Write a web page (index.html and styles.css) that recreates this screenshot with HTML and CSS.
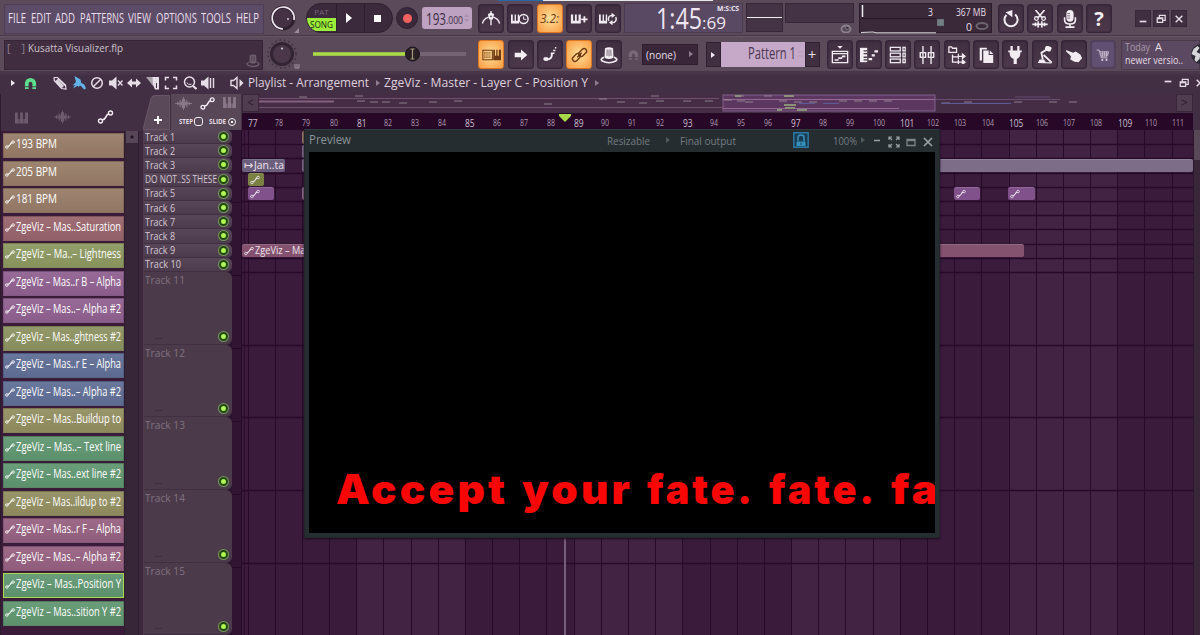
FILE: index.html
```html
<!DOCTYPE html>
<html lang="en">
<head>
<meta charset="utf-8">
<title>Kusatta Visualizer.flp</title>
<link rel="stylesheet" href="styles.css">
</head>
<body>
<svg class="sprite" aria-hidden="true">
  <symbol id="metro" viewBox="0 0 20 20"><path d="M.500 15q1-5 7-7M19.500 15q-1-5-7-7" fill="none" stroke="currentColor" stroke-width="1.500"/><path d="M10 1v16" stroke="currentColor" stroke-width="1.500"/><path d="M6.500 4.500L10 3l3.500 1.500-1.500 6H8z" fill="currentColor"/><circle cx="10" cy="7" r="1" fill="#49384a"/></symbol>
  <symbol id="wait" viewBox="0 0 20 20"><path d="M0 5h2v7h2V5h1.500v7h2V5H9v10H0z" fill="currentColor"/><circle cx="14" cy="10" r="5" fill="none" stroke="currentColor" stroke-width="1.600"/><path d="M14 7v3.300h3" fill="none" stroke="currentColor"/></symbol>
  <symbol id="keysplus" viewBox="0 0 20 20"><path d="M1 5h2.500v7h2V5h2v7h2V5H12v10H1zM15 7h2v2.500h2.500v2H17V14h-2v-2.500h-2.500v-2H15z" fill="currentColor"/></symbol>
  <symbol id="keysloop" viewBox="0 0 20 20"><path d="M0 5h2v7h2V5h1.500v7h2V5H9v10H0z" fill="currentColor"/><path d="M11 12a4 4 0 0 1 4-6M18.500 8a4 4 0 0 1-4 6" fill="none" stroke="currentColor" stroke-width="1.600"/><path d="M14 3l4 3-4 3zM15 11l-4 3 4 3z" fill="currentColor"/></symbol>
  <symbol id="typing" viewBox="0 0 22 14"><path d="M1 1.500h11v11H1z" fill="none" stroke="currentColor" stroke-width="1.200"/><path d="M2.500 4.500h8M2.500 7h8M2.500 9.500h8" stroke="currentColor" stroke-width="1.300" stroke-dasharray="1.500 1"/><path d="M13 1h2v7h1.500V1h1.500v7h1.500V1H22v12h-9z" fill="currentColor"/></symbol>
  <symbol id="arrow" viewBox="0 0 20 20"><path d="M3 7.500h7V4l7 6-7 6v-3.500H3z" fill="currentColor"/></symbol>
  <symbol id="glide" viewBox="0 0 20 20"><path d="M6 15q7 0 6-7" fill="none" stroke="currentColor" stroke-width="2.200"/><ellipse cx="5.500" cy="14.500" rx="3" ry="2.200" fill="currentColor"/><path d="M11 8h4M13.500 5h2.500M15.500 2h1.500" stroke="currentColor" stroke-width="1.600"/></symbol>
  <symbol id="link" viewBox="0 0 20 20"><g fill="none" stroke="currentColor" stroke-width="1.500"><rect x="1.500" y="10" width="10" height="5.500" rx="2.700" transform="rotate(-45 6.500 12.700)"/><rect x="8.500" y="4.500" width="10" height="5.500" rx="2.700" transform="rotate(-45 13.500 7.200)"/><path d="M7.500 12.500l5-5"/></g></symbol>
  <symbol id="hat" viewBox="0 0 20 20"><path d="M5.500 2.500q4.500-2.500 9 0L15 13q-5 3-10 0z" fill="currentColor"/><path d="M4.500 12.500q-5 2-2 4.200 7.500 3.800 15 0 3-2.200-2-4.200" fill="none" stroke="currentColor" stroke-width="1.900"/><path d="M8 4l-.3 7M10 4v7.500M12 4l.3 7" stroke="#4a374a" stroke-width=".8"/></symbol>
  <symbol id="magnet" viewBox="0 0 14 14"><path d="M1 13V7a6 6 0 0 1 12 0v6H9V7a2 2 0 0 0-4 0v6z" fill="currentColor"/><path d="M1 10.500h4.500M8.500 10.500H13" stroke="#432f44" stroke-width=".9"/></symbol>
  <symbol id="playlist" viewBox="0 0 20 20"><path d="M7 0h6l-3 3z" fill="currentColor"/><path d="M1.500 6h17v12.500h-17zM1.500 8.500h17" fill="none" stroke="currentColor" stroke-width="1.500"/><path d="M4 15.500h4.500M8 13.500h4.500M12 11.500h4" stroke="currentColor" stroke-width="1.800"/></symbol>
  <symbol id="roll" viewBox="0 0 20 20"><path d="M0 2h8v16H0z" fill="currentColor"/><path d="M4 5.500h4M4 8.500h4M4 12.500h4M4 15.500h4" stroke="#49384a" stroke-width="1.400"/><path d="M9.500 14.500h4M13 10.500h3.500M16 6h4" stroke="currentColor" stroke-width="2.600"/></symbol>
  <symbol id="rack" viewBox="0 0 20 20"><g fill="none" stroke="currentColor" stroke-width="1.400"><rect x="1.500" y="1.500" width="11" height="4"/><rect x="1.500" y="8" width="11" height="4"/><rect x="1.500" y="14.500" width="11" height="4"/><rect x="15.500" y="1.500" width="2.500" height="4"/><rect x="15.500" y="8" width="2.500" height="4"/><rect x="15.500" y="14.500" width="2.500" height="4"/></g></symbol>
  <symbol id="mixer" viewBox="0 0 20 20"><g fill="none" stroke="currentColor" stroke-width="1.500"><path d="M5.500 0v7M5.500 13v7M14.500 0v7M14.500 13v7"/><rect x="2.500" y="7.500" width="6" height="5"/><rect x="11.500" y="7.500" width="6" height="5"/><path d="M5.500 8v4M14.500 8v4"/></g></symbol>
  <symbol id="browser" viewBox="0 0 20 20"><path d="M1 1h3l1 1.500h4.500V7H1zM5 9.500V18h7M5 12h6" fill="none" stroke="currentColor" stroke-width="1.400"/><path d="M11.500 8.500v6.500M16 9v5l3-2.500zM11 11.500h6M11.500 15.500V20M16 15.500v5l3-2.500zM11 18h6" fill="currentColor" stroke="currentColor" stroke-width="1.300"/></symbol>
  <symbol id="copy" viewBox="0 0 20 20"><path d="M3 2h8v2H5.500v12H3zM7 5h6v5h5v9H7z" fill="currentColor"/><path d="M14.200 5l4 4h-4z" fill="currentColor"/></symbol>
  <symbol id="plug" viewBox="0 0 20 20"><path d="M5 0h2.500v5h5V0H15v5h2.500v2H16q0 6-4 7.500V20H8.500v-5.500Q4 13 4 7H2.500V5H5z" fill="currentColor"/></symbol>
  <symbol id="touch" viewBox="0 0 20 20"><rect x="10" y="0" width="7" height="5.500" rx="2" transform="rotate(20 13 3)" fill="currentColor"/><path d="M12 4L6 7.500 7.500 15M8.500 10l9 8.500" fill="none" stroke="currentColor" stroke-width="2"/><path d="M2 19l2-4h5l2 3h6v1.500z" fill="currentColor"/></symbol>
  <symbol id="hand" viewBox="0 0 20 20"><path d="M1 4.500l8 3 3-1.500 5 3.500 2 4-4 4.500-4.500-.5-4.500-2.500v-2l1-.5-1.500-2.500L1.500 6.500z" fill="currentColor"/></symbol>
  <symbol id="cart" viewBox="0 0 20 20"><path d="M1 3h3.500l3 11h9M5 5.500h13l-2 6H7M6 8.500h11M9 5v7M12 5v7M15 5v7" fill="none" stroke="currentColor" stroke-width="1.200"/><circle cx="9" cy="17" r="1.500" fill="currentColor"/><circle cx="15" cy="17" r="1.500" fill="currentColor"/></symbol>
  <symbol id="undo" viewBox="0 0 20 20"><path d="M5 5.500A7.300 7.300 0 1 0 14.500 5" fill="none" stroke="currentColor" stroke-width="2.200"/><path d="M4 2.500L11.500 0v8z" fill="currentColor"/></symbol>
  <symbol id="cut" viewBox="0 0 20 20"><path d="M5 0l7.500 9M15 0L7.500 9" stroke="currentColor" stroke-width="1.800"/><g fill="none" stroke="currentColor" stroke-width="1.400"><circle cx="6" cy="9.500" r="2"/><circle cx="14" cy="9.500" r="2"/></g><path d="M1.500 16h17M5 14v4M8 12.500v7M12 12.500v7M15 14v4" stroke="currentColor" stroke-width="1.800"/></symbol>
  <symbol id="mic" viewBox="0 0 20 20"><rect x="6" y="0" width="8" height="13" rx="4" fill="currentColor"/><path d="M4 8v3q0 4.500 6 4.500T16 11V8M10 15v4M5 19h10" fill="none" stroke="currentColor" stroke-width="1.800"/><path d="M7 4h3M7 6.500h3M7 9h3" stroke="#4a374a" stroke-width=".8"/></symbol>
  <symbol id="min" viewBox="0 0 12 12"><path d="M2 9h8" stroke="currentColor" stroke-width="2"/></symbol>
  <symbol id="restore" viewBox="0 0 12 12"><path d="M1.500 4.500h6.500v5.500H1.500zM1.500 5.500H8M4 4V1.500h7v6H8.500" fill="none" stroke="currentColor" stroke-width="1.500"/></symbol>
  <symbol id="close" viewBox="0 0 12 12"><path d="M2 2l8 8M10 2l-8 8" stroke="currentColor" stroke-width="1.700"/></symbol>
  <symbol id="pencil" viewBox="0 0 14 14"><path d="M1.200 1.500h3.300l8 7.500.5 4-4.500-.5-7.300-8zM3 4.500l6.500 7M5 2.500l7 7M4 3.500l6.500 7" fill="none" stroke="currentColor" stroke-width="1.200"/></symbol>
  <symbol id="brush" viewBox="0 0 14 14"><path d="M2.500 0l6 3.500.8 3.500 3 1.500 1.700 4-2 1-2.500-3-1.500-1-1.500 1.500-1-1.200L1 12.500l2-3.500-2.500.5L4 6z" fill="currentColor"/></symbol>
  <symbol id="ban" viewBox="0 0 14 14"><path d="M3 11l8-8" stroke="currentColor" stroke-width="1.500"/><circle cx="7" cy="7" r="5.300" fill="none" stroke="currentColor" stroke-width="1.500"/></symbol>
  <symbol id="mute" viewBox="0 0 14 14"><path d="M0 4.500h3l4.500-4v13l-4.500-4H0z" fill="currentColor"/><path d="M9 4.500l4.500 5M13.500 4.500l-4.500 5" stroke="currentColor" stroke-width="1.300"/></symbol>
  <symbol id="slip" viewBox="0 0 14 14"><path d="M0 7l5-4.500V5.500h4V2.500L14 7l-5 4.500V8.500H5v3z" fill="currentColor"/></symbol>
  <symbol id="slice" viewBox="0 0 14 14"><path d="M0 1h7v9z" fill="currentColor" opacity=".65"/><path d="M6.500 1H13v12.500H9L7 9z" fill="currentColor"/><path d="M10.500 7v5" stroke="#432f44"/></symbol>
  <symbol id="select" viewBox="0 0 14 14"><path d="M1.500 4.500V1.500H5M9 1.500h3.500V4.500M12.500 9.500v3H9M5 12.500H1.500V9.500" fill="none" stroke="currentColor" stroke-width="1.500"/></symbol>
  <symbol id="zoom" viewBox="0 0 14 14"><circle cx="6.500" cy="6" r="5" fill="none" stroke="currentColor" stroke-width="1.500"/><path d="M4 6.500q1 3 4.500 1.500" fill="none" stroke="currentColor"/><path d="M10 10l3.500 3" stroke="currentColor" stroke-width="2.200"/></symbol>
  <symbol id="play" viewBox="0 0 14 14"><path d="M0 4.500h3l4.500-4v13l-4.500-4H0z" fill="currentColor"/><path d="M9.500 2v10M12.500 2v10" stroke="currentColor" stroke-width="1.400"/></symbol>
  <symbol id="speaker" viewBox="0 0 14 14"><path d="M1 4.500h2.500L7 1.500v11L3.500 9.500H1z" fill="none" stroke="currentColor" stroke-width="1.400"/><path d="M9.500 3L13.500 7 9.500 11z" fill="currentColor"/></symbol>
  <symbol id="auto" viewBox="0 0 16 14"><path d="M4.500 10q3-.5 4-3.200T11.500 4" fill="none" stroke="currentColor" stroke-width="1.700"/><circle cx="3" cy="11" r="2" fill="none" stroke="currentColor" stroke-width="1.400"/><circle cx="13" cy="3" r="2" fill="none" stroke="currentColor" stroke-width="1.400"/></symbol>
  <symbol id="keys" viewBox="0 0 14 12"><path d="M0 0h3v7h2.500V0h3v7H11V0h3v12H0z" fill="currentColor"/><path d="M4.500 7v5M9.500 7v5" stroke="#432f44" stroke-width=".6"/></symbol>
  <symbol id="wave" viewBox="0 0 18 14"><path d="M0 6.500h2l.5-1.500h1v1.500h1l.5-3.500h1v2.500h1L7.500 2h1v-2h1v2h1l.5 3.500h1V3h1l.5 3.500h1V5h1l.5 1.500h2v1h-2L15.500 9h-1V7.500h-1L13 11h-1V8.500h-1L10.500 12h-1v2h-1v-2h-1L7 8.500H6V11H5l-.5-3.500h-1V9h-1L2 7.500H0z" fill="currentColor"/></symbol>
  <symbol id="expand" viewBox="0 0 12 12"><path d="M1 4V1h3M8 1h3v3M11 8v3H8M4 11H1V8M1 1l3 3M11 1L8 4M11 11L8 8M1 11l3-3" fill="none" stroke="currentColor" stroke-width="1.200"/></symbol>
</svg>

<header class="toolbar">
  <div class="bar">
    <nav class="menu"><b data-w="18">FILE</b><b data-w="20">EDIT</b><b data-w="20">ADD</b><b data-w="44">PATTERNS</b><b data-w="23">VIEW</b><b data-w="41">OPTIONS</b><b data-w="30">TOOLS</b><b data-w="23">HELP</b></nav>
    <svg class="knob" viewBox="0 0 36 36"><circle cx="17" cy="18" r="11" fill="#443244" stroke="#2f2030" stroke-width="3"/><path d="M17 29A11 11 0 1 1 28 20" fill="none" stroke="#efe6ef" stroke-width="1.700"/><circle cx="22" cy="19" r=".9" fill="#ddd"/><path d="M33 28v5h-5z" fill="#9a8a9a"/></svg>
    <div class="transport">
      <div class="mode"><span class="pat">PAT</span><span class="song"><b data-w="23">SONG</b></span></div>
      <div class="cell"><svg width="8" height="12"><path d="M1 1l6 5-6 5z" fill="#fff"/></svg></div>
      <div class="cell"><i class="stop"></i></div>
    </div>
    <div class="rec"><i></i></div>
    <div class="tempo"><b class="big" data-w="20">193</b><b class="small" data-w="17">.000</b><svg width="5" height="10"><path d="M0 4l2.500-3L5 4zM0 6l2.500 3L5 6z" fill="#a98fac"/></svg></div>
    <div class="tools tools-a">
      <span class="btn"><svg><use href="#metro"/></svg></span><span class="btn"><svg><use href="#wait"/></svg></span><span class="btn lit"><b class="count" data-w="19">3.2:</b></span><span class="btn"><svg><use href="#keysplus"/></svg></span><span class="btn"><svg><use href="#keysloop"/></svg></span>
    </div>
    <div class="clock"><b class="t" data-w="46">1:45</b><b class="cs" data-w="24">:69</b><span class="unit"><b data-w="22">M:S:CS</b></span></div>
    <svg class="scope" viewBox="0 0 112 30"><rect x=".500" y=".500" width="36" height="28" fill="#443245" stroke="#382739"/><path d="M1 14.500h35" stroke="#eee"/><rect x="39.500" y=".500" width="68" height="19" fill="#443245" stroke="#382739"/><ellipse cx="100" cy="26" rx="4.500" ry="3.500" fill="none" stroke="#8b828c" stroke-width="1.800"/><path d="M100 23v3h3" stroke="#8b828c"/></svg>
    <div class="perf">
      <svg class="perf-graph" viewBox="0 0 75 30"><path d="M1.500 1v12" stroke="#eee" stroke-width="1.500"/><path d="M0 28.500l12-.5 3 .8h60" stroke="#ddd" fill="none"/><path d="M0 14.500h75" stroke="#241826"/></svg>
      <b class="cpu" data-w="5">3</b><div class="mem"><b data-w="30">367 MB</b><span class="voices"><b data-w="6">0</b><svg width="14" height="10"><ellipse cx="7" cy="5" rx="5.500" ry="3" fill="none" stroke="#6d656e" stroke-width="2"/></svg></span></div>
      <svg class="chip" viewBox="0 0 8 8"><path d="M1 1h6v6H1z" fill="#728084"/></svg>
    </div>
    <div class="tools tools-b">
      <span class="btn"><svg><use href="#undo"/></svg></span><span class="btn"><svg><use href="#cut"/></svg></span><span class="btn"><svg><use href="#mic"/></svg></span><span class="btn help">?</span>
    </div>
    <div class="win"><span><svg><use href="#min"/></svg></span><span><svg><use href="#restore"/></svg></span><span><svg><use href="#close"/></svg></span></div>
  </div>
  <div class="bar">
    <div class="hint"><span class="br"><b data-w="18">[ &nbsp; &nbsp;]</b></span><b data-w="95">Kusatta Visualizer.flp</b><svg class="hint-hat"><use href="#hat"/></svg></div>
    <svg class="knob" viewBox="0 0 36 36"><circle cx="17" cy="18" r="14" fill="none" stroke="#3d2d3e" stroke-width="1.500" stroke-dasharray="1.500 3"/><circle cx="17" cy="18" r="10.500" fill="#4a384a" stroke="#332434" stroke-width="3"/><circle cx="17" cy="12.500" r="1" fill="#ddd"/><path d="M30 28v4h4v-4M32 28v4" fill="none" stroke="#a191a0"/></svg>
    <svg class="slider" viewBox="0 0 160 20"><path d="M1 10h153" stroke="#746473" stroke-width="4"/><path d="M1 10h100" stroke="#a9dc42" stroke-width="3.600"/><circle cx="100.500" cy="10" r="7" fill="#292026" stroke="#1b131c"/><path d="M100.500 5v10M98.500 5h4M98.500 15h4" stroke="#a69b78" stroke-width="1.200"/></svg>
    <div class="tools tools-a">
      <span class="btn lit"><svg><use href="#typing"/></svg></span><span class="btn"><svg><use href="#arrow"/></svg></span><span class="btn"><svg><use href="#glide"/></svg></span><span class="btn lit"><svg><use href="#link"/></svg></span><span class="btn"><svg><use href="#hat"/></svg></span>
    </div>
    <svg class="snap-icon"><use href="#magnet"/></svg>
    <div class="snap"><b data-w="30">(none)</b><i class="tri"></i></div>
    <div class="pattern"><span class="end"><i class="tri white"></i></span><span class="name"><b data-w="48">Pattern 1</b><svg width="5" height="12"><path d="M0 4h5M0 8h5" stroke="#b79bb9"/></svg></span><span class="end">+</span></div>
    <div class="tools tools-c">
      <span class="btn"><svg><use href="#playlist"/></svg></span><span class="btn"><svg><use href="#roll"/></svg></span><span class="btn"><svg><use href="#rack"/></svg></span><span class="btn"><svg><use href="#mixer"/></svg></span><span class="btn"><svg><use href="#browser"/></svg></span><span class="btn"><svg><use href="#copy"/></svg></span><span class="btn"><svg><use href="#plug"/></svg></span><span class="btn"><svg><use href="#touch"/></svg></span><span class="btn"><svg><use href="#hand"/></svg></span><span class="btn shop"><svg><use href="#cart"/></svg></span>
    </div>
    <div class="news"><p><b class="dim" data-w="25">Today</b><b class="adj" data-w="7">A</b></p><p><b data-w="58">newer versio..</b></p><svg class="globe" viewBox="0 0 22 22"><circle cx="11" cy="11" r="10" fill="#2c2a35"/><path d="M1.500 11l2-5 4-3 2 2-3 4 4 2-1 5-3 3-2-2 1-4z" fill="#d5d5da"/></svg></div>
  </div>
</header>

<div class="titlebar">
  <i class="tri white"></i>
  <svg class="ti mag"><use href="#magnet"/></svg>
  <svg class="ti first"><use href="#pencil"/></svg><svg class="ti blue"><use href="#brush"/></svg><svg class="ti"><use href="#ban"/></svg><svg class="ti"><use href="#mute"/></svg><svg class="ti"><use href="#slip"/></svg><svg class="ti"><use href="#slice"/></svg><svg class="ti"><use href="#select"/></svg><svg class="ti"><use href="#zoom"/></svg><svg class="ti"><use href="#play"/></svg>
  <svg class="ti spk"><use href="#speaker"/></svg>
  <b class="crumb" data-w="121">Playlist - Arrangement</b><i class="tri dimtri"></i><b class="crumb" data-w="204">ZgeViz - Master - Layer C - Position Y</b><i class="tri dimtri"></i>
  <div class="doc-win"><svg><use href="#min"/></svg><svg><use href="#restore"/></svg><svg><use href="#close"/></svg></div>
</div>

<main class="workspace">
  <aside class="picker">
    <div class="picker-tabs"><svg><use href="#keys"/></svg><svg class="w"><use href="#wave"/></svg><svg class="w on"><use href="#auto"/></svg></div>
    <div class="picker-body"><div class="items" id="items"></div><div class="rail"><i></i></div></div>
  </aside>
  <section class="playlist">
    <div class="top">
      <div class="corner">
        <svg class="slant" viewBox="0 0 27 35"><path d="M0 35L8 4q1-3 4-3h15v34z" fill="#5a4959" stroke="#7b6a7a" stroke-width=".6"/><path d="M15 21.500v8M11 25.500h8" stroke="#fff" stroke-width="2"/></svg>
        <div class="corner-panel">
          <div class="ci"><svg class="w"><use href="#wave"/></svg><svg class="w on"><use href="#auto"/></svg><svg><use href="#keys"/></svg></div>
          <div class="cl"><b data-w="14">STEP</b><i class="box"></i><b data-w="17">SLIDE</b><i class="dot"></i></div>
        </div>
      </div>
      <div class="timeline">
        <div class="map"><span class="nav">&lt;</span><svg class="mini" id="mini" viewBox="0 0 917 18" preserveAspectRatio="none"></svg><span class="nav">&gt;</span></div>
        <div class="ruler" id="ruler"></div>
      </div>
    </div>
    <div class="lanes">
      <div class="heads" id="heads"></div>
      <div class="gutter"></div>
      <div class="canvas" id="canvas"></div>
      <div class="vscroll"><i></i></div>
    </div>
  </section>
</main>

<div class="preview">
  <div class="preview-bar">
    <b class="ptitle" data-w="42">Preview</b><b class="pr" data-w="43">Resizable</b><i class="tri pt1"></i><b class="po" data-w="56">Final output</b>
    <svg class="lock" viewBox="0 0 16 16"><path d="M.800.800h14.400v14.400H.800z" fill="#1b3c50" stroke="#2b7ba8" stroke-width="1.400"/><path d="M5 9V5.500q0-2.500 3-2.500t3 2.500V9" fill="none" stroke="#3590be" stroke-width="1.500"/><path d="M3.500 9.500h9V14h-9z" fill="#3590be"/><path d="M8 10.500v2.500" stroke="#16415a"/></svg>
    <b class="pz" data-w="24">100%</b><i class="tri pt2"></i>
    <svg class="pw" viewBox="0 0 12 12"><path d="M3 4.500h6" stroke="#9aa1a3" stroke-width="1.500"/></svg><svg class="pw"><use href="#expand"/></svg><svg class="pw" viewBox="0 0 12 12"><path d="M2 3.500h8v6H2zM2 4.500h8" fill="none" stroke="#7d8486" stroke-width="1.300"/></svg><svg class="pw"><use href="#close"/></svg>
  </div>
  <div class="screen"><p class="lyric"><b data-w="172">Accept</b><b data-w="111">your</b><b data-w="108">fate.</b><b data-w="108">fate.</b><b data-w="50">fa</b></p></div>
</div>
<script src="app.js"></script>
</body>
</html>
```
FILE: styles.css
```css
* { box-sizing: border-box; }
body { margin: 0; width: 1200px; height: 635px; overflow: hidden; position: relative; background: #3b1b3c; color: #e6dde6; font: 12px/1 "Open Sans", "Noto Sans", sans-serif; display: flex; flex-direction: column; }
b { font-weight: 400; }
p { margin: 0; }
i { display: block; flex: none; }
svg { display: block; flex: none; }
.sprite { position: absolute; width: 0; height: 0; }
[data-w] { display: block; flex: none; white-space: nowrap; }
[data-w] > span { display: inline-block; transform-origin: 0 50%; white-space: pre; }
.tri { width: 0; height: 0; border: 3.5px solid transparent; border-left: 4px solid #8d7c8d; border-right: 0; }
.tri.white { border-left-color: #f2eaf2; }

.toolbar { height: 72px; flex: none; background: linear-gradient(90deg, #2668a8 45px, #e8e8ec 45px) 498px 0 / 215px 1px no-repeat, #5a4a5a; }
.bar { height: 36px; display: flex; align-items: flex-start; padding: 3px 0 0 4px; border-bottom: 1px solid #483748; }
.bar + .bar { box-shadow: inset 0 1px #665666; }
.menu { width: 260px; height: 30px; margin-top: 1px; background: #5d4c68; border: 1px solid #4d3d55; display: flex; align-items: center; justify-content: space-between; padding: 0 4px 1px 3px; font-size: 14.5px; color: #eadfec; }
.knob { width: 36px; height: 36px; margin: -3px 2px 0 2px; }
.transport { display: flex; width: 87px; height: 30px; margin-left: 2px; border-radius: 15px; overflow: hidden; background: #3b2a3c; border: 1px solid #2f2030; }
.mode { width: 29px; text-align: center; font-size: 8px; }
.pat { display: block; height: 14px; padding-top: 4px; color: #75647a; }
.song { display: block; height: 13px; padding: 0 0 0 3px; background: #9cec3c; color: #1b2a0a; font-size: 9.5px; line-height: 13px; }
.song b { text-align: left; }
.cell { flex: 1; display: flex; align-items: center; justify-content: center; border-left: 1px solid #2c1d2d; }
.cell svg { margin-left: -4px; }
.stop { width: 7px; height: 7px; background: #fff; margin-left: -3px; }
.rec { width: 22px; height: 22px; margin: 4px 0 0 3px; border-radius: 50%; background: #3a293b; border: 1px solid #302131; display: flex; align-items: center; justify-content: center; }
.rec i { width: 9px; height: 9px; border-radius: 50%; background: #f4625f; }
.tempo { width: 50px; height: 22px; margin: 4px 0 0 4px; border-radius: 3px; background: #bda3c1; color: #3f2e43; display: flex; align-items: center; padding: 0 2px 0 4px; }
.tempo .big { font-size: 17px; }
.tempo .small { font-size: 11.5px; padding-top: 4px; margin-right: 1px; }
.tools { display: flex; gap: 3.3px; }
.tools-a { margin-left: 6px; margin-top: 1px; }
.btn { width: 26px; height: 29px; border-radius: 3px; background: linear-gradient(#402e41, #4b394b); border: 1px solid #35253a; box-shadow: inset 0 0 2px #2b1b2e; display: flex; align-items: center; justify-content: center; color: #f3edf3; }
.btn svg { width: 18px; height: 18px; }
.lit { background: radial-gradient(#ffe09a, #f9a54e 85%); border-color: #e0761f; color: #6d3812; box-shadow: none; }
.lit svg { width: 19px; }
.count { font-size: 13px; font-style: italic; }
.help { font-size: 20px; font-weight: 700; }
.clock { position: relative; width: 119px; height: 30px; margin-left: 3px; background: #5a4962; border: 1px solid #4c3b50; display: flex; padding-left: 31px; color: #eee5f2; }
.clock .t { font-size: 29px; line-height: 27px; }
.clock .cs { font-size: 16.5px; line-height: 16px; padding-top: 11px; }
.unit { position: absolute; right: 3px; top: 1px; font-size: 6.5px; line-height: 7px; font-weight: 700; }
.unit b { font-weight: 700; }
.scope { width: 112px; height: 30px; margin-left: 3px; }
.perf { position: relative; width: 133px; height: 30px; margin-left: 1px; background: #392939; border: 1px solid #2b1c2d; display: flex; font-size: 11.5px; }
.perf-graph { position: absolute; left: 1px; top: 0; width: 75px; height: 30px; }
.cpu { margin: 2px 0 0 68px; }
.mem { margin-left: auto; padding: 2px 2px 0 0; }
.voices { display: flex; margin: 3px 0 0 10px; gap: 3px; }
.chip { position: absolute; left: 76px; top: 14px; width: 9px; height: 9px; }
.tools-b { margin: 1px 0 0 6px; }
.win { display: flex; gap: 2px; margin: 7px 0 0 23px; }
.win span { width: 16px; height: 17px; background: #402f41; border: 1px solid #37273a; display: flex; align-items: center; justify-content: center; }
.win svg { width: 10px; height: 10px; }
.hint { position: relative; width: 260px; height: 30px; margin-top: 1px; background: #402e40; border: 1px solid #362537; display: flex; padding: 1px 0 0 2px; font-size: 10.5px; line-height: 12px; color: #cdc1cd; }
.br { color: #8d7e8d; width: 21px; }
.hint-hat { position: absolute; right: 2px; bottom: 1px; width: 14px; height: 15px; color: #6c5e6c; }
.slider { width: 160px; height: 20px; margin: 5px 0 0 9px; }
.bar .slider + .tools-a { margin-left: 6px; }
.snap-icon { width: 11px; height: 12px; margin: 10px 0 0 6px; color: #796979; }
.snap { width: 56px; height: 21px; margin: 5px 0 0 3px; background: #392739; border: 1px solid #2d1d2e; display: flex; align-items: center; justify-content: space-between; padding: 0 4px 1px 3px; font-size: 11px; }
.pattern { display: flex; height: 25px; margin: 3px 0 0 8px; }
.pattern .end { width: 15px; background: #402e41; border: 1px solid #302031; display: flex; align-items: center; justify-content: center; font-size: 15px; }
.pattern .name { width: 84px; background: #c6a9c9; color: #4b364f; font-size: 15.5px; display: flex; align-items: center; justify-content: flex-end; gap: 2px; padding: 0 2px 2px 0; }
.tools-c { margin: 1px 0 0 7px; }
.shop { background: #615071; border-color: #51405c; }
.btn.shop svg { width: 14px; height: 14px; color: #d5c8da; }
.news { position: relative; width: 79px; height: 30px; margin: 1px 0 0 5px; padding: 0 0 0 3px; border: 1px solid #493949; background: #5a4960; font-size: 10.5px; }
.news p { display: flex; gap: 5px; height: 13px; align-items: center; }
.dim { color: #aa9aad; }
.globe { position: absolute; right: -13px; top: 2px; width: 22px; height: 22px; }

.titlebar { height: 22px; flex: none; background: linear-gradient(#4b384c, #432f44 4px); display: flex; align-items: center; padding-left: 11px; }
.ti { width: 14px; height: 14px; margin-right: 4.5px; }
.mag { color: #5edd8c; margin: 0 23px 0 9px; width: 13px; height: 13px; }
.titlebar .first { margin-left: -7px; }
.blue { color: #62b4e8; }
.spk { margin-left: 10px; }
.crumb { font-size: 12px; color: #ded2de; }
.dimtri { margin: 0 7px; }
.crumb + .dimtri { margin-left: 7px; margin-right: 4px; }
.doc-win { margin-left: auto; display: flex; gap: 6px; margin-right: -5px; }
.doc-win svg { width: 10px; height: 10px; }
.doc-win svg:first-child { margin-top: -4px; }

.workspace { flex: 1; min-height: 0; display: flex; }
.picker { width: 143px; flex: none; background: #3c293d; border-left: 1px solid #2c1a2d; display: flex; flex-direction: column; }
.picker-tabs { height: 37px; flex: none; background: #422f43; display: flex; align-items: flex-end; padding: 0 0 7px 14px; gap: 26px; color: #6c5b6d; }
.picker-tabs svg { width: 13px; height: 12px; }
.picker-tabs svg.w { width: 17px; height: 14px; }
.on { color: #f5eef5; }
.picker-body { display: flex; flex: 1; }
.items { width: 123px; background: #3a1c3a; padding: 2px 0 0 2px; }
.item { width: 121px; height: 25px; margin-bottom: 2.5px; display: flex; align-items: center; padding: 0 0 2px 1px; font-size: 12.5px; font-weight: 500; color: #fff; border: 1px solid #00000022; background-image: linear-gradient(#ffffff12, #00000008); }
.item b, .head b { font-weight: 500; }
.item svg { width: 10px; height: 9px; margin-right: 1px; }
.item.current { border-color: #a9da4c; }
.rail { width: 15px; border-left: 1px solid #2e1c30; border-right: 1px solid #2e1c30; background: #372637; }
.rail i { width: 12px; height: 12px; margin: 0 0 0 1px; background: radial-gradient(#211422 15%, #574658 22%); }

.playlist { flex: 1; min-width: 0; display: flex; flex-direction: column; background: #432f44; }
.top { display: flex; height: 36px; flex: none; }
.corner { width: 99px; display: flex; }
.slant { width: 27px; height: 36px; }
.corner-panel { width: 71px; background: #584757; border-left: 1px solid #3d2c3e; padding: 3px 3px 0 4px; }
.ci { display: flex; gap: 8px; height: 13px; color: #89788a; }
.ci svg { width: 13px; height: 11px; }
.ci svg.w { width: 17px; height: 13px; }
.ci svg.on { width: 15px; }
.cl { display: flex; align-items: center; font-size: 7px; font-weight: 700; margin-top: 7px; padding-left: 4px; }
.cl b { font-weight: 700; }
.box { width: 9px; height: 9px; border: 1px solid #eee; border-radius: 3px; margin: 0 6px 0 1px; }
.dot { width: 8px; height: 8px; border: 1px solid #eee; border-radius: 50%; margin-left: 2px; background: radial-gradient(#fff 20%, transparent 30%); }
.timeline { width: 951px; }
.map { height: 19px; display: flex; }
.nav { width: 17px; height: 18px; background: #503e50; border: 1px solid #392739; color: #2c1a2c; text-align: center; line-height: 16px; font-size: 12px; }
.mini { width: 917px; height: 18px; }
.ruler { height: 17px; background: #270927; padding-left: 5px; display: flex; overflow: hidden; }
.tick { width: 27.18px; flex: none; color: #ad9bb0; font-size: 9.5px; padding: 5px 0 0 1px; }
.tick.major { font-size: 11px; color: #cdbfd0; padding-top: 4px; }
.lanes { flex: 1; display: flex; min-height: 0; }
.heads { width: 89px; background: #2a142d; border-left: 1px solid #4f3c50; }
.head { height: 14.2px; position: relative; background: linear-gradient(#574657, #4c3b4d); border-bottom: 1px solid #403042; border-radius: 0 5px 5px 0; padding-left: 1px; display: flex; justify-content: space-between; align-items: center; font-size: 10px; color: #d4c7d4; }
.head.tall { height: 72.7px; font-size: 11.5px; color: #807180; align-items: flex-start; background: #4b3b4a; border-radius: 0 6px 6px 0; padding-top: 2px; }
.more { position: absolute; left: 11px; bottom: 4px; color: #2b1c2b; font-size: 9px; }
.led { width: 9px; height: 9px; border-radius: 50%; background: #b0f556; border: 2px solid #234711; box-shadow: 0 0 0 1px #75955f; margin-right: 4px; }
.tall .led { position: absolute; right: 0; bottom: 3px; }
.gutter { width: 10px; background: repeating-linear-gradient(#301431 0 72px, #250b28 72px 73px); border-right: 1px solid #250b28; }
.canvas { width: 951px; position: relative; overflow: hidden; background: #3b1b3c; }
.grid { display: block; width: 951px; height: 505px; }
.clip { position: absolute; border-radius: 2px; height: 13px; font-size: 10.5px; color: #eee2ee; display: flex; align-items: center; padding: 0 0 1px 2px; gap: 1px; border-top: 1px solid #ffffff22; }
.clip svg { width: 10px; height: 10px; }
.playhead { position: absolute; left: 322px; top: 0; width: 1.5px; height: 505px; background: #765d78; }
.vscroll { flex: 1; background: #392639; border-left: 1px solid #2b182d; }
.vscroll i { height: 30px; background: #584858; }

.preview { position: absolute; left: 304px; top: 129px; width: 636px; height: 409px; background: #262d31; border: 1px solid #21262b; border-top-color: #303b3f; padding: 0 4px 4px; display: flex; flex-direction: column; box-shadow: 0 1px 2px #1a0a1c; }
.preview-bar { height: 22px; display: flex; align-items: center; padding-bottom: 2px; font-size: 11px; color: #737c80; }
.ptitle { color: #8a9396; font-size: 12px; }
.pr { margin-left: 256px; }
.pt1 { margin: 0 10px 0 16px; }
.preview .tri { border-left-color: #50595d; }
.lock { width: 16px; height: 16px; margin-left: 57px; }
.pz { margin-left: 24px; }
.pt2 { margin: 0 3px 0 4px; }
.pw { width: 12px; height: 12px; margin: 3px 0 0 5px; color: #9aa1a3; }
.pt2 + .pw { margin-left: 3px; }
.screen { flex: 1; background: #000; overflow: hidden; display: flex; align-items: flex-end; }
.lyric { display: flex; gap: 14px; padding: 0 0 19px 27px; font: 900 41px/50px Inter, "Open Sans", sans-serif; color: #fb0505; }
.lyric b { font-weight: 900; letter-spacing: 3px; }
.lyric i { display: inline-block; font-style: normal; }
```
FILE: app.js
```js
const byId = id => document.getElementById(id);
const icon = name => `<svg><use href="#${name}"/></svg>`;

const clips = [
  ['193 BPM', 41, '#967b66'], ['205 BPM', 41, '#967b66'], ['181 BPM', 41, '#967b66'],
  ['ZgeViz – Mas..Saturation', 105, '#97636b'], ['ZgeViz – Ma..– Lightness', 105, '#8b975f'],
  ['ZgeViz – Mas..r B – Alpha', 105, '#8f5f8f'], ['ZgeViz – Mas..– Alpha #2', 105, '#8f5f8f'],
  ['ZgeViz – Mas..ghtness #2', 105, '#8b915f'], ['ZgeViz – Mas..r E – Alpha', 105, '#5f6d95'],
  ['ZgeViz – Mas..– Alpha #2', 105, '#5f6d95'], ['ZgeViz – Mas..Buildup to', 105, '#918d5f'],
  ['ZgeViz – Mas..– Text line', 105, '#5f956f'], ['ZgeViz – Mas..ext line #2', 105, '#5f956f'],
  ['ZgeViz – Mas..ildup to #2', 105, '#918d5f'], ['ZgeViz – Mas..r F – Alpha', 105, '#955f7f'],
  ['ZgeViz – Mas..– Alpha #2', 105, '#955f7f'], ['ZgeViz – Mas..Position Y', 105, '#5f956f', 1],
  ['ZgeViz – Mas..sition Y #2', 105, '#5f956f']
];
byId('items').innerHTML = clips.map(([t, w, c, cur]) =>
  `<div class="item${cur ? ' current' : ''}" style="background-color:${c}">${icon('auto')}<b data-w="${w}">${t}</b></div>`).join('');

let heads = '';
for (let i = 1; i <= 15; i++) {
  const tall = i > 10;
  const name = i === 4 ? 'DO NOT..SS THESE' : 'Track ' + i;
  const w = i === 4 ? 72 : tall ? 40 : i === 10 ? 36 : 30;
  heads += `<div class="head${tall ? ' tall' : ''}"><b data-w="${w}">${name}</b>${tall ? '<span class="more">...</span>' : ''}<i class="led"></i></div>`;
}
byId('heads').innerHTML = heads;

let ticks = '';
for (let n = 77; n <= 111; n++) {
  const major = n % 4 === 1;
  const w = (major ? 4.8 : 4) * String(n).length;
  ticks += `<span class="tick${major ? ' major' : ''}"><b data-w="${w}">${n}</b></span>`;
}
byId('ruler').innerHTML = ticks;

const bar = 27.18, x0 = 5.5;
let g = '';
for (let k = 1; k < 9; k += 2) g += `<rect x="${x0 + k * 4 * bar}" y="0" width="${4 * bar}" height="505" fill="#432344"/>`;
g += '<path d="M2.500 0V505" stroke="#2c0d2e"/>';
for (let k = 0; k < 35; k++) g += `<path d="M${Math.round(x0 + k * bar) + .5} 0V505" stroke="#250b28"/>`;
const edges = [];
for (let i = 1; i <= 10; i++) edges.push(i * 14.2);
for (let i = 1; i <= 5; i++) edges.push(142 + i * 72.7);
edges.forEach(y => { g += `<path d="M0 ${Math.round(y) + .5}H951" stroke="#250b28" stroke-width="1.5"/>`; });

const blocks = [
  [0, 28.5, 43, '#6b5f7d', '<b data-w="9">↦</b><b data-w="30">Jan..ta</b>'],
  [60, 28.5, 891, '#7d6d88', ''],
  [6, 43, 16, '#7b8143', icon('auto')],
  [6, 57, 26, '#80518a', icon('auto')],
  [712, 57, 26, '#80518a', icon('auto')],
  [766, 57, 27, '#80518a', icon('auto')],
  [0, 114, 782, '#84526f', icon('auto') + '<b data-w="58">ZgeViz – Mast</b>'],
  [60, 1, 4, '#967b66', ''], [60, 15, 4, '#7d6d88', ''], [60, 57, 4, '#8b6b88', '']
];
byId('canvas').innerHTML = `<svg class="grid" viewBox="0 0 951 505">${g}</svg>` +
  blocks.map(([x, y, w, c, h]) => `<div class="clip" style="left:${x}px;top:${y}px;width:${w}px;background:${c}">${h}</div>`).join('') +
  '<i class="playhead"></i>';

let m = '<rect width="917" height="18" fill="#452d46"/><path d="M0 4.500H460M0 13.500H640" stroke="#70516f"/><path d="M0 7.500H75" stroke="#85607f" stroke-width="2"/>';
m += '<rect x="464" y="1" width="212" height="16" fill="#5c3860" stroke="#80608a"/><path d="M464 5.500H676M464 14.500H640" stroke="#946a94"/>';
const dashes = [[40, 3], [96, 2], [98, 7], [111, 8], [123, 8], [140, 9], [170, 8], [195, 7], [285, 10], [340, 5], [358, 8], [380, 9], [392, 2], [397, 7], [424, 7], [446, 7], [465, 6], [477, 2], [478, 7], [486, 8], [505, 2], [520, 7], [535, 8], [550, 8], [580, 7], [595, 7], [610, 7], [625, 7], [683, 9], [705, 8], [755, 8], [790, 8], [810, 8]];
dashes.forEach(([x, y]) => { m += `<path d="M${x} ${y}h8" stroke="#a398a0" opacity=".6" stroke-width="1.300"/>`; });
m += '<path d="M525 2h10M525 11h12M526 14h10M518 16h5M538 16h10M476 2h6" stroke="#8b9078" stroke-width="2"/><path d="M540 9.500h16M564 9.500h16M682 9.500h70" stroke="#5d5a9a"/><path d="M676 5.500h125M756 3h35" stroke="#655073"/>';
byId('mini').innerHTML = m;

// Song position marker on the ruler
byId('ruler').insertAdjacentHTML('beforeend', '<svg class="marker" viewBox="0 0 12 10"><path d="M0 1h12v2L6 9 0 3z" fill="#a8d84a"/></svg>');
const mark = document.querySelector('.marker');
mark.style.cssText = 'position:absolute;left:558.5px;top:113px;width:12px;height:10px';

// Condense each label horizontally to its column width
document.querySelectorAll('[data-w]').forEach(el => {
  const s = document.createElement('span');
  s.textContent = el.textContent;
  el.textContent = '';
  el.appendChild(s);
  const w = Number(el.dataset.w);
  const natural = s.getBoundingClientRect().width;
  el.style.width = w + 'px';
  s.style.transform = `scaleX(${w / natural})`;
});
```
